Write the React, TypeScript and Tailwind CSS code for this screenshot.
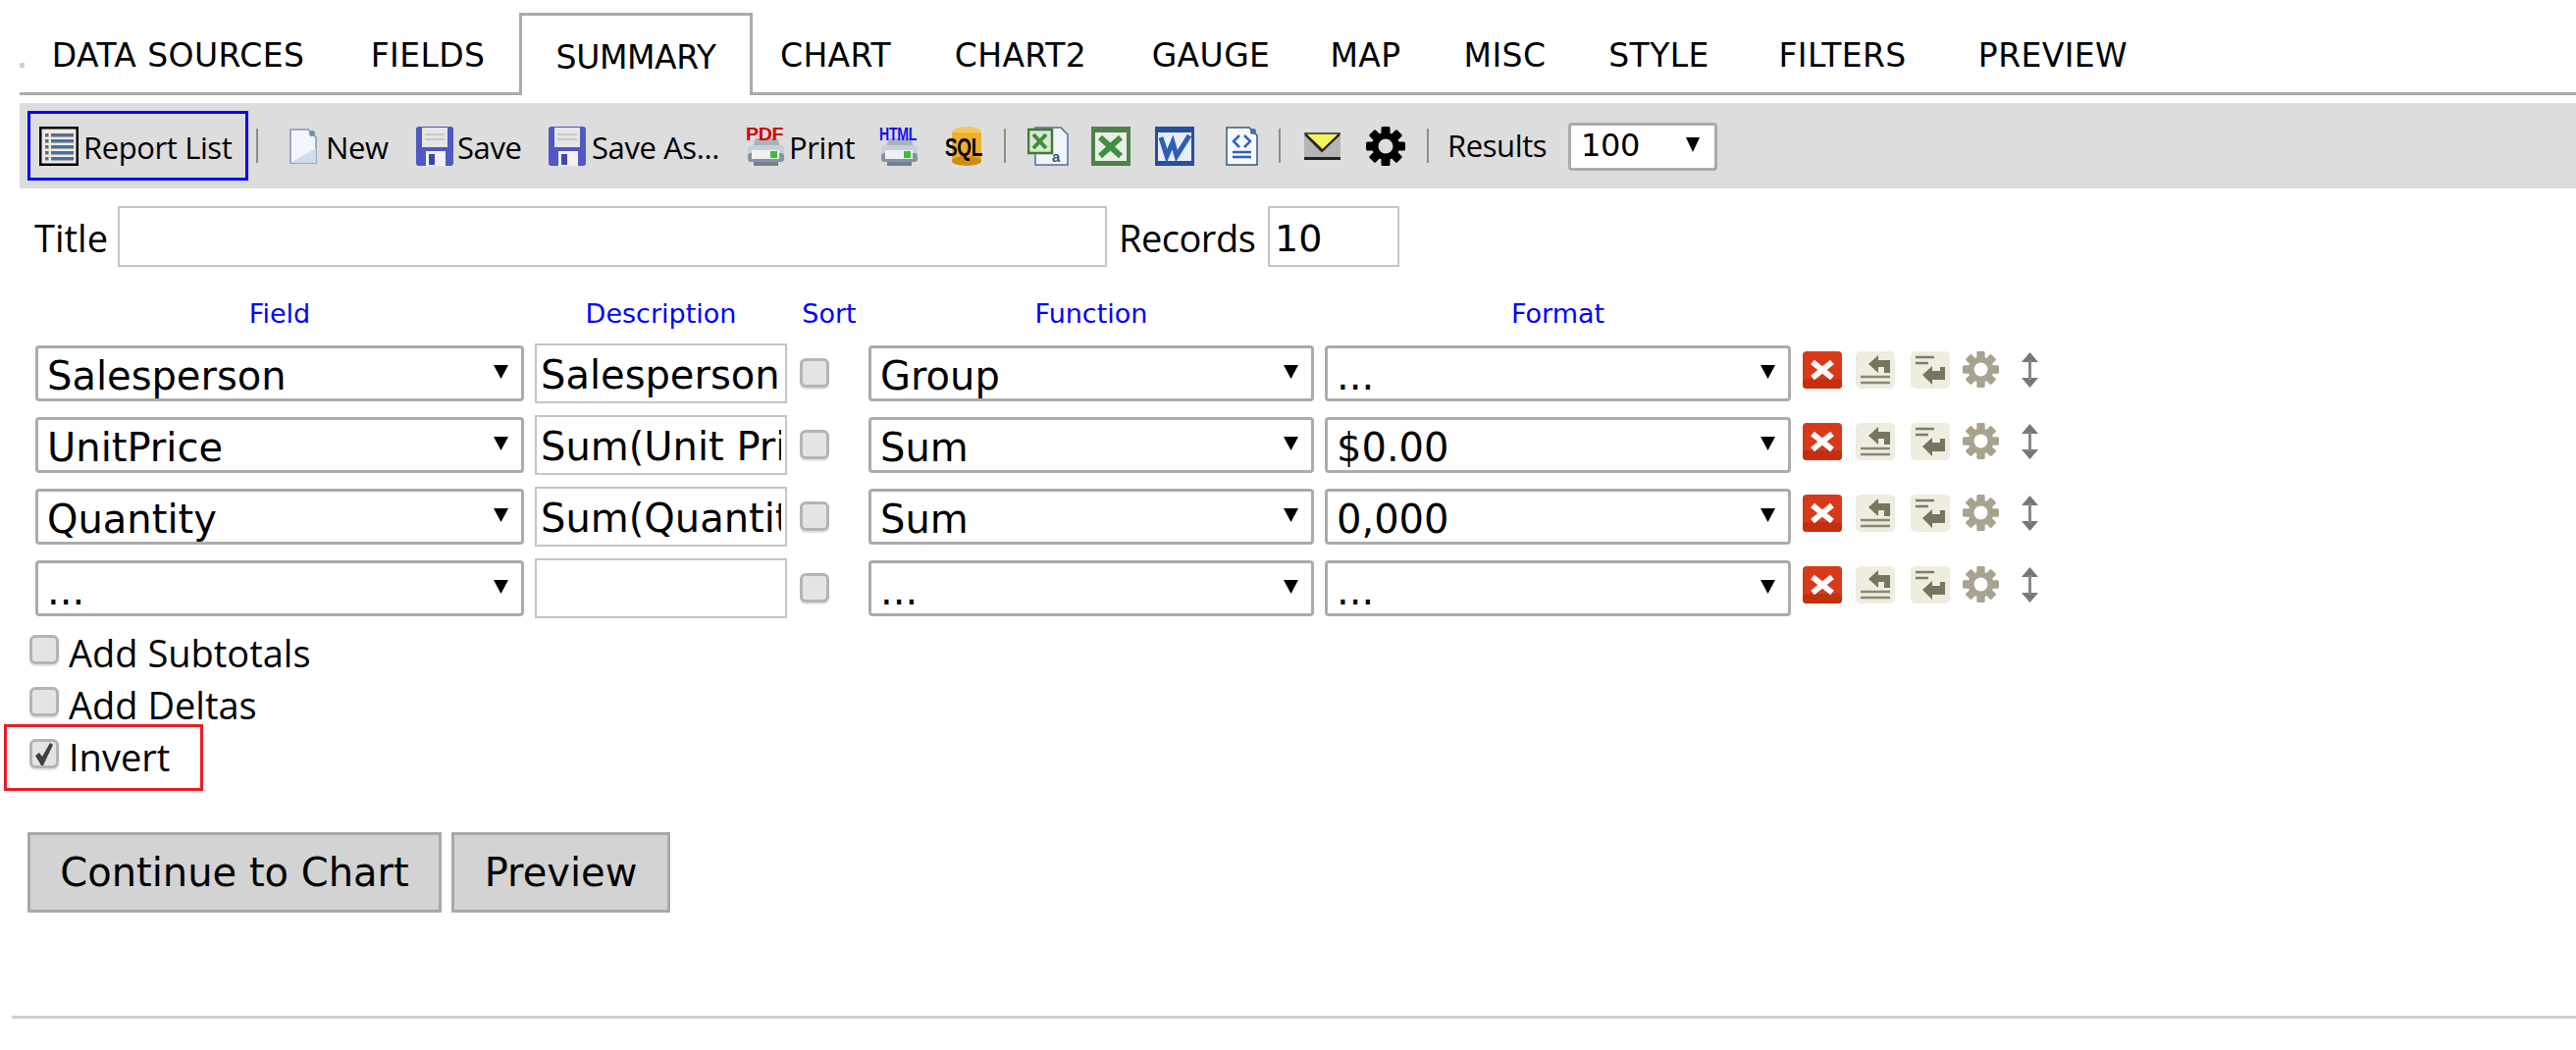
import React from "react";

const ui = "font-['Open_Sans',sans-serif]";
const dv = "font-['DejaVu_Sans',sans-serif]";

const tabs = [
  { label: "DATA SOURCES", w: "w-[323px]" },
  { label: "FIELDS", w: "w-[186px]" },
  { label: "SUMMARY", w: "w-[238px]", active: true },
  { label: "CHART", w: "w-[169px]" },
  { label: "CHART2", w: "w-[208px]" },
  { label: "GAUGE", w: "w-[180px]" },
  { label: "MAP", w: "w-[135px]" },
  { label: "MISC", w: "w-[149px]" },
  { label: "STYLE", w: "w-[165px]" },
  { label: "FILTERS", w: "w-[209px]" },
  { label: "PREVIEW", w: "w-[220px]" },
];

function ListIcon() {
  return (
    <svg width="40" height="40" viewBox="0 0 40 40" className="shrink-0">
      <rect x="1" y="1" width="38" height="38" fill="#efeadf" stroke="#000" strokeWidth="3" />
      {[7, 13, 19, 25, 31].map((y) => (
        <g key={y} fill="#4f6f98">
          <rect x="6" y={y} width="3.5" height="3.5" />
          <rect x="12" y={y} width="23" height="3.5" />
        </g>
      ))}
    </svg>
  );
}

function DocIcon() {
  return (
    <svg width="28" height="36" viewBox="0 0 28 36" className="shrink-0">
      <path d="M1 1h18l8 8v26H1z" fill="#f4f6fc" stroke="#7f96b5" strokeWidth="1.5" />
      <path d="M1 35h26V20z" fill="#cfdcee" />
      <circle cx="23" cy="5" r="3" fill="#6f8db0" />
    </svg>
  );
}

function FloppyIcon() {
  return (
    <svg width="38" height="40" viewBox="0 0 38 40" className="shrink-0">
      <rect width="38" height="40" rx="3" fill="#5058c2" />
      <rect x="6" y="1" width="26" height="20" fill="#e6e6e6" />
      <rect x="9" y="7" width="20" height="2" fill="#c9c9c9" />
      <rect x="9" y="12" width="20" height="2" fill="#c9c9c9" />
      <rect x="10" y="25" width="20" height="15" fill="#f1f1f4" />
      <rect x="13" y="28" width="6" height="11" fill="#3b4aa5" />
    </svg>
  );
}

function PrinterIcon({ label, color }: { label: string; color: string }) {
  return (
    <svg width="40" height="40" viewBox="0 0 40 40" className="shrink-0 overflow-visible">
      <path d="M10 12h22l3 8H7z" fill="#a8b2bb" />
      <rect x="2" y="19" width="37" height="16" rx="4" fill="#c7d0d8" />
      <rect x="2" y="27" width="37" height="9" rx="3" fill="#8494a3" />
      <rect x="6" y="24" width="28" height="9" fill="#eef1f3" />
      <rect x="25" y="25" width="7" height="7" fill="#36c234" />
      <rect x="8" y="36" width="25" height="4" fill="#6f8192" />
      <text x="0" y="14" fontSize="19" fontWeight="700" fill={color} textLength="38" lengthAdjust="spacingAndGlyphs" fontFamily="'Liberation Sans',sans-serif">
        {label}
      </text>
    </svg>
  );
}

function SqlIcon() {
  return (
    <svg width="38" height="40" viewBox="0 0 38 40" className="shrink-0 overflow-visible">
      <ellipse cx="22" cy="6" rx="15" ry="6" fill="#f2c65c" />
      <rect x="7" y="6" width="30" height="29" fill="#eeb02c" />
      <ellipse cx="22" cy="35" rx="15" ry="5" fill="#cf8d17" />
      <text x="0" y="30" fontSize="25" fontWeight="700" fill="#000" textLength="38" lengthAdjust="spacingAndGlyphs" fontFamily="'Liberation Sans',sans-serif">
        SQL
      </text>
    </svg>
  );
}

function XlsDocIcon() {
  return (
    <svg width="42" height="40" viewBox="0 0 42 40" className="shrink-0">
      <path d="M8 1h26l7 7v31H8z" fill="#f1f5fb" stroke="#4d6f98" strokeWidth="1.5" />
      <rect x="1" y="3" width="24" height="24" fill="#dbe7d3" stroke="#3d7d33" strokeWidth="2.5" />
      <path d="M6 8l13 14M19 8L6 22" stroke="#3e8f3a" strokeWidth="4" />
      <text x="25" y="36" fontSize="15" fontWeight="700" fill="#33567d" fontFamily="'Liberation Sans',sans-serif">a</text>
    </svg>
  );
}

function ExcelIcon() {
  return (
    <svg width="40" height="40" viewBox="0 0 40 40" className="shrink-0">
      <rect width="40" height="40" fill="#4d8249" />
      <rect x="4" y="6" width="32" height="29" fill="#e9efe6" />
      <path d="M9 11l21 19M30 11L9 30" stroke="#3f9140" strokeWidth="6" />
    </svg>
  );
}

function WordIcon() {
  return (
    <svg width="40" height="40" viewBox="0 0 40 40" className="shrink-0">
      <rect width="40" height="40" fill="#254f9d" />
      <rect x="3" y="6" width="34" height="29" fill="#e8edf8" />
      <path d="M6 11l6 19 6-14 4 14 13-21" fill="none" stroke="#2f5fb5" strokeWidth="5" />
    </svg>
  );
}

function XmlDocIcon() {
  return (
    <svg width="33" height="40" viewBox="0 0 33 40" className="shrink-0">
      <path d="M1 1h23l8 8v30H1z" fill="#f6f8fd" stroke="#38597f" strokeWidth="1.5" />
      <circle cx="28" cy="5" r="3" fill="#4b6f95" />
      <path d="M14 9l-6 6 6 6M19 9l6 6-6 6" fill="none" stroke="#2f62b5" strokeWidth="2.5" />
      <path d="M7 26h19M7 31h19" stroke="#2f62b5" strokeWidth="2.5" />
    </svg>
  );
}

function MailIcon() {
  return (
    <svg width="37" height="28" viewBox="0 0 37 28" className="shrink-0">
      <rect width="37" height="28" fill="#b5b5b5" />
      <rect y="25" width="37" height="3" fill="#222" />
      <path d="M1 1h35L19 18z" fill="#f7f35c" stroke="#333" strokeWidth="1.5" />
      <path d="M1 2l17 17L36 2" fill="none" stroke="#222" strokeWidth="2" />
    </svg>
  );
}

function Cog({ size, fill, hole }: { size: number; fill: string; hole: string }) {
  return (
    <svg width={size} height={size} viewBox="0 0 40 40" className="shrink-0">
      {[0, 45, 90, 135].map((r) => (
        <rect key={r} x="15.5" y="0" width="9" height="40" rx="1.5" fill={fill} transform={`rotate(${r} 20 20)`} />
      ))}
      <circle cx="20" cy="20" r="14" fill={fill} />
      <circle cx="20" cy="20" r="7.5" fill={hole} />
    </svg>
  );
}

function Sep({ ml, mr }: { ml: string; mr: string }) {
  return <div className={`w-[2px] h-[35px] bg-[#8d8d8d] shrink-0 ${ml} ${mr}`} />;
}

function DeleteIcon() {
  return (
    <svg width="40" height="38" viewBox="0 0 40 38" className="shrink-0">
      <rect width="40" height="38" rx="4" fill="#d8391a" />
      <rect y="28" width="40" height="10" rx="4" fill="#c42f0e" />
      <path d="M10 11l20 16M30 11L10 27" stroke="#fff" strokeWidth="6" />
    </svg>
  );
}

function OutdentIcon({ flip }: { flip?: boolean }) {
  return (
    <svg width="40" height="38" viewBox="0 0 40 38" className="shrink-0">
      <rect width="40" height="38" rx="5" fill="#efece0" />
      {flip ? (
        <>
          <path d="M5 6h19M5 12h13" stroke="#7e7b6b" strokeWidth="2.5" />
          <path d="M12 24l10-9v5h8v-4h5v13H22v5z" fill="#77745f" />
        </>
      ) : (
        <>
          <path d="M5 26h30M5 32h30" stroke="#8a8774" strokeWidth="2.5" />
          <path d="M13 13l10-9v5h12v13h-6v-6h-6v6z" fill="#77745f" />
        </>
      )}
    </svg>
  );
}

function UpDownIcon() {
  return (
    <svg width="19" height="38" viewBox="0 0 19 38" className="shrink-0">
      <path d="M9.5 1L18 11H1zM9.5 37L18 27H1z" fill="#777" />
      <rect x="8" y="9" width="3" height="20" fill="#888" />
    </svg>
  );
}

function Arrow() {
  return (
    <svg width="15" height="14" viewBox="0 0 15 14" className="absolute right-[16px] top-[20px] pointer-events-none">
      <path d="M0 0h15L7.5 14z" fill="#000" />
    </svg>
  );
}

function Select({ value, w, options }: { value: string; w: string; options?: string[] }) {
  return (
    <div className={`relative shrink-0 h-[57px] ${w}`}>
      <select
        defaultValue={value}
        className={`w-full h-full appearance-none bg-white border-[3px] border-[#ababab] rounded-[4px] pl-[9px] pt-[5px] text-[40px] leading-[46px] text-black ${dv}`}
      >
        {(options ?? [value]).map((o) => (
          <option key={o}>{o}</option>
        ))}
      </select>
      <Arrow />
    </div>
  );
}

function Check({ checked }: { checked?: boolean }) {
  return (
    <div className="relative w-[30px] h-[31px] shrink-0">
      <input
        type="checkbox"
        defaultChecked={checked}
        className="block appearance-none w-[30px] h-[30px] rounded-[6px] border-[3px] border-[#b4b4b4] bg-[#e4e4e4] shadow-[0_2px_1px_#e3e3e3]"
      />
      {checked && (
        <svg width="22" height="24" viewBox="0 0 22 24" className="absolute left-[4px] top-[4px] pointer-events-none">
          <path d="M2 13l4-3 3 4 8-14 3 2-10 21h-2z" fill="#3f3f3f" />
        </svg>
      )}
    </div>
  );
}

const rows = [
  { field: "Salesperson", desc: "Salesperson", fn: "Group", format: "..." },
  { field: "UnitPrice", desc: "Sum(Unit Price)", fn: "Sum", format: "$0.00" },
  { field: "Quantity", desc: "Sum(Quantity)", fn: "Sum", format: "0,000" },
  { field: "...", desc: "", fn: "...", format: "..." },
];

function FieldRow({ field, desc, fn, format }: (typeof rows)[number]) {
  return (
    <div className="flex items-center h-[61px]">
      <Select value={field} w="w-[498px]" />
      <input
        defaultValue={desc}
        className={`ml-[11px] w-[257px] h-[61px] shrink-0 border-2 border-[#c4c4c4] px-[4px] pt-[3px] text-[40px] text-black ${dv}`}
      />
      <div className="ml-[13px]">
        <Check />
      </div>
      <div className="ml-[40px]">
        <Select value={fn} w="w-[454px]" />
      </div>
      <div className="ml-[11px]">
        <Select value={format} w="w-[475px]" />
      </div>
      <div className="ml-[12px] mb-[8px] flex items-center">
        <DeleteIcon />
        <div className="ml-[14px]">
          <OutdentIcon />
        </div>
        <div className="ml-[16px]">
          <OutdentIcon flip />
        </div>
        <div className="ml-[13px]">
          <Cog size={37} fill="#a7a38f" hole="#ffffff" />
        </div>
        <div className="ml-[22px]">
          <UpDownIcon />
        </div>
      </div>
    </div>
  );
}

export default function App() {
  return (
    <div className="relative w-[2625px] h-[1070px] overflow-hidden bg-white text-black">
      <div className="ml-[20px] h-[97px] border-b-[3px] border-[#ababab] flex items-end">
        <div className="w-[5px] h-[5px] bg-[#d0d0d0] mb-[25px] shrink-0 -mr-[5px]" />
        {tabs.map((t) =>
          t.active ? (
            <div
              key={t.label}
              className={`${t.w} h-[84px] -mb-[3px] shrink-0 flex justify-center items-center bg-white border-[3px] border-b-0 border-[#ababab] pt-[5px] text-[33px] tracking-[-0.4px] ${dv}`}
            >
              {t.label}
            </div>
          ) : (
            <div
              key={t.label}
              className={`${t.w} h-[80px] shrink-0 flex justify-center items-center pt-[5px] text-[33px] tracking-[0.4px] ${dv}`}
            >
              {t.label}
            </div>
          ),
        )}
      </div>

      <div className={`mt-[8px] ml-[20px] h-[87px] bg-[#dddddd] flex items-center text-[31px] tracking-[-0.4px] ${ui}`}>
        <div className="ml-[8px] w-[225px] h-[71px] border-[3px] border-[#0000ff] flex items-center pl-[9px] shrink-0">
          <ListIcon />
          <span className="ml-[5px] pt-[3px] whitespace-nowrap">Report List</span>
        </div>
        <Sep ml="ml-[8px]" mr="mr-[32px]" />
        <DocIcon />
        <span className="ml-[9px] pt-[3px] w-[92px] shrink-0">New</span>
        <FloppyIcon />
        <span className="ml-[4px] pt-[3px] w-[93px] shrink-0">Save</span>
        <FloppyIcon />
        <span className="ml-[6px] pt-[3px] w-[157px] shrink-0 whitespace-nowrap">Save As...</span>
        <PrinterIcon label="PDF" color="#d40000" />
        <span className="ml-[4px] pt-[3px] w-[92px] shrink-0">Print</span>
        <PrinterIcon label="HTML" color="#1010f0" />
        <div className="ml-[27px]">
          <SqlIcon />
        </div>
        <Sep ml="ml-[22px]" mr="mr-[22px]" />
        <XlsDocIcon />
        <div className="ml-[23px]">
          <ExcelIcon />
        </div>
        <div className="ml-[25px]">
          <WordIcon />
        </div>
        <div className="ml-[32px]">
          <XmlDocIcon />
        </div>
        <Sep ml="ml-[21px]" mr="mr-[24px]" />
        <MailIcon />
        <div className="ml-[26px]">
          <Cog size={40} fill="#000000" hole="#dddddd" />
        </div>
        <Sep ml="ml-[22px]" mr="mr-[19px]" />
        <span className="w-[123px] shrink-0">Results</span>
        <div className="relative w-[152px] h-[49px] shrink-0">
          <select
            defaultValue="100"
            className={`w-full h-full appearance-none bg-white border-[3px] border-[#ababab] rounded-[4px] pl-[10px] pb-[3px] text-[32px] leading-[40px] text-black ${dv}`}
          >
            <option>100</option>
          </select>
          <svg width="14" height="15" viewBox="0 0 14 15" className="absolute right-[18px] top-[16px] pointer-events-none">
            <path d="M0 0h14L7 15z" fill="#000" />
          </svg>
        </div>
      </div>

      <div className={`mt-[18px] ml-[35px] h-[62px] flex items-center text-[38px] ${ui}`}>
        <span className="w-[85px] pt-[3px] shrink-0">Title</span>
        <input className="w-[1008px] h-[62px] shrink-0 border-2 border-[#c4c4c4]" />
        <span className="ml-[12px] w-[152px] pt-[3px] shrink-0 tracking-[-0.5px]">Records</span>
        <input
          defaultValue="10"
          className={`w-[134px] h-[62px] shrink-0 border-2 border-[#c4c4c4] px-[5px] pt-[3px] text-[38px] ${dv}`}
        />
      </div>

      <div className={`mt-[30px] ml-[36px] h-[36px] flex items-center text-[27px] text-[#0000ff] ${dv}`}>
        <div className="w-[498px] text-center">Field</div>
        <div className="ml-[11px] w-[257px] text-center">Description</div>
        <div className="ml-[3px] w-[80px] text-center">Sort</div>
        <div className="w-[454px] text-center">Function</div>
        <div className="ml-[11px] w-[475px] text-center">Format</div>
      </div>

      <div className="mt-[12px] ml-[36px] flex flex-col gap-[12px]">
        {rows.map((r) => (
          <FieldRow key={r.field} {...r} />
        ))}
      </div>

      <div className={`mt-[17px] ml-[30px] flex flex-col text-[38px] ${ui}`}>
        <label className="h-[53px] flex items-start">
          <Check />
          <span className="ml-[10px] -mt-[10px]">Add Subtotals</span>
        </label>
        <label className="h-[53px] flex items-start">
          <Check />
          <span className="ml-[10px] -mt-[10px]">Add Deltas</span>
        </label>
        <label className="h-[53px] flex items-start">
          <Check checked />
          <span className="ml-[10px] -mt-[10px]">Invert</span>
        </label>
      </div>

      <div className={`mt-[42px] ml-[28px] flex gap-[10px] text-[40px] ${dv}`}>
        <button className="w-[422px] h-[82px] bg-[#d3d3d3] border-[3px] border-[#a9a9a9]">Continue to Chart</button>
        <button className="w-[223px] h-[82px] bg-[#d3d3d3] border-[3px] border-[#a9a9a9]">Preview</button>
      </div>

      <div className="mt-[105px] ml-[12px] h-[3px] bg-[#cfcfcf]" />

      <div className="absolute left-[4px] top-[738px] w-[203px] h-[68px] border-[3px] border-[#ee1c25] pointer-events-none" />
    </div>
  );
}
